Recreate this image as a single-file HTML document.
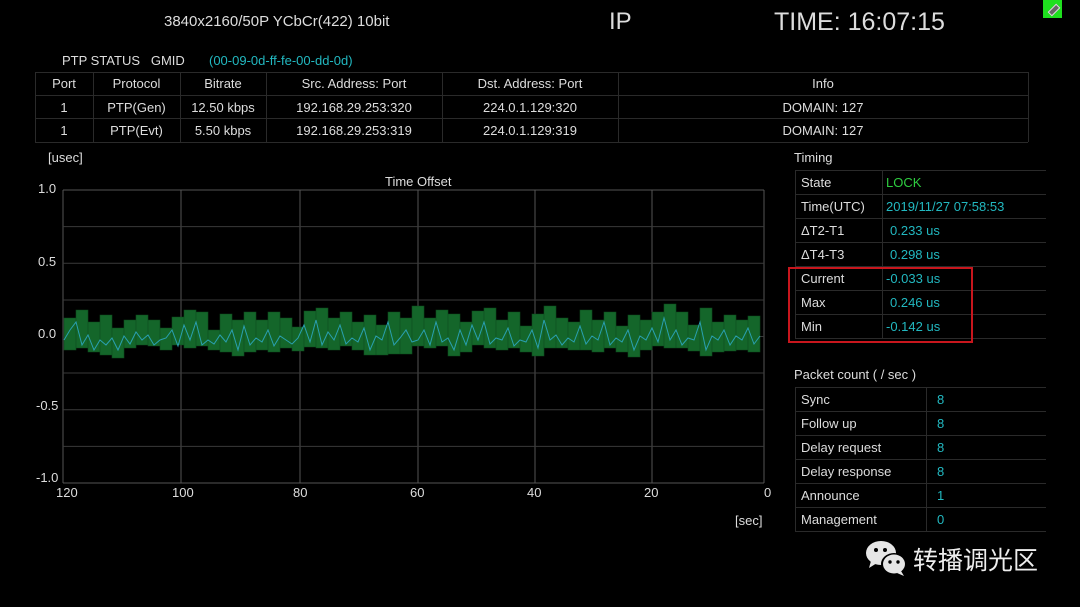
<!DOCTYPE html>
<html><head><meta charset="utf-8"><style>
body{margin:0;background:#000;width:1080px;height:607px;overflow:hidden;position:relative;font-family:"Liberation Sans","Noto Sans CJK SC",sans-serif;color:#ddd}
.t{position:absolute;white-space:nowrap}
.c{color:#22b8c0}
.hl{position:absolute;height:1px;background:#2a2a2a}
.vl{position:absolute;width:1px;background:#2a2a2a}
.tb>div{display:flex;height:23px;line-height:23px;border-top:1px solid #2a2a2a;border-left:1px solid #2a2a2a}
.tb>div>span:first-child{padding-left:5px;border-right:1px solid #2a2a2a}
.tb>div>span:last-child{color:#22b8c0}
</style></head><body>
<div class="t" style="left:164px;top:13px;font-size:15px">3840x2160/50P YCbCr(422) 10bit</div>
<div class="t" style="left:609px;top:8px;font-size:24px">IP</div>
<div class="t" style="left:774px;top:8px;font-size:25px">TIME: 16:07:15</div>
<div style="position:absolute;left:1043px;top:0;width:19px;height:18px;background:#1ee01e"></div>
<div style="position:absolute;left:1048px;top:7px;width:10px;height:4px;background:#666;border:1px solid #ddd;transform:rotate(-45deg)"></div>

<div class="t" style="left:62px;top:53px;font-size:13px">PTP STATUS&nbsp;&nbsp;&nbsp;GMID</div>
<div class="t c" style="left:209px;top:53px;font-size:13px">(00-09-0d-ff-fe-00-dd-0d)</div>
<div class="hl" style="left:35px;top:72px;width:993px"></div>
<div class="hl" style="left:35px;top:95px;width:993px"></div>
<div class="hl" style="left:35px;top:118px;width:993px"></div>
<div class="hl" style="left:35px;top:142px;width:993px"></div>
<div class="vl" style="left:35px;top:72px;height:70px"></div>
<div class="vl" style="left:93px;top:72px;height:70px"></div>
<div class="vl" style="left:180px;top:72px;height:70px"></div>
<div class="vl" style="left:266px;top:72px;height:70px"></div>
<div class="vl" style="left:442px;top:72px;height:70px"></div>
<div class="vl" style="left:618px;top:72px;height:70px"></div>
<div class="vl" style="left:1028px;top:72px;height:70px"></div>
<div style="position:absolute;left:35px;top:72px;font-size:13px;line-height:23.5px">
<div style="display:flex"><span style="width:58px;text-align:center">Port</span><span style="width:87px;text-align:center">Protocol</span><span style="width:86px;text-align:center">Bitrate</span><span style="width:176px;text-align:center">Src. Address: Port</span><span style="width:176px;text-align:center">Dst. Address: Port</span><span style="width:410px;text-align:center">Info</span></div>
<div style="display:flex"><span style="width:58px;text-align:center">1</span><span style="width:87px;text-align:center">PTP(Gen)</span><span style="width:86px;text-align:center">12.50 kbps</span><span style="width:176px;text-align:center">192.168.29.253:320</span><span style="width:176px;text-align:center">224.0.1.129:320</span><span style="width:410px;text-align:center">DOMAIN: 127</span></div>
<div style="display:flex"><span style="width:58px;text-align:center">1</span><span style="width:87px;text-align:center">PTP(Evt)</span><span style="width:86px;text-align:center">5.50 kbps</span><span style="width:176px;text-align:center">192.168.29.253:319</span><span style="width:176px;text-align:center">224.0.1.129:319</span><span style="width:410px;text-align:center">DOMAIN: 127</span></div>
</div>

<div class="t" style="left:48px;top:150px;font-size:13px">[usec]</div>
<div class="t" style="left:385px;top:174px;font-size:13px">Time Offset</div>
<div class="t" style="left:38px;top:181px;font-size:13px">1.0</div>
<div class="t" style="left:38px;top:254px;font-size:13px">0.5</div>
<div class="t" style="left:38px;top:326px;font-size:13px">0.0</div>
<div class="t" style="left:36px;top:398px;font-size:13px">-0.5</div>
<div class="t" style="left:36px;top:470px;font-size:13px">-1.0</div>
<div class="t" style="left:56px;top:485px;font-size:13px">120</div>
<div class="t" style="left:172px;top:485px;font-size:13px">100</div>
<div class="t" style="left:293px;top:485px;font-size:13px">80</div>
<div class="t" style="left:410px;top:485px;font-size:13px">60</div>
<div class="t" style="left:527px;top:485px;font-size:13px">40</div>
<div class="t" style="left:644px;top:485px;font-size:13px">20</div>
<div class="t" style="left:764px;top:485px;font-size:13px">0</div>
<div class="t" style="left:735px;top:513px;font-size:13px">[sec]</div>
<svg style="position:absolute;left:0;top:0" width="1080" height="607">
<g stroke="#555">
<line x1="63" y1="190" x2="63" y2="483"/><line x1="181" y1="190" x2="181" y2="483"/><line x1="300" y1="190" x2="300" y2="483"/><line x1="418" y1="190" x2="418" y2="483"/><line x1="535" y1="190" x2="535" y2="483"/><line x1="652" y1="190" x2="652" y2="483"/><line x1="764" y1="190" x2="764" y2="483"/>
<line x1="63" y1="190" x2="764" y2="190"/><line x1="63" y1="483" x2="764" y2="483"/>
</g>
<g stroke="#3a3a3a">
<line x1="63" y1="226.6" x2="764" y2="226.6"/><line x1="63" y1="263.3" x2="764" y2="263.3"/><line x1="63" y1="300" x2="764" y2="300"/><line x1="63" y1="336.5" x2="764" y2="336.5"/><line x1="63" y1="373" x2="764" y2="373"/><line x1="63" y1="409.8" x2="764" y2="409.8"/><line x1="63" y1="446.4" x2="764" y2="446.4"/>
</g>
<path fill="#14662a" stroke="#0d4a1d" stroke-width="0.6" d="
M64 318h12v32h-12z M76 310h12v38h-12z M88 322h12v30h-12z M100 315h12v40h-12z M112 328h12v30h-12z
M124 320h12v28h-12z M136 315h12v30h-12z M148 320h12v26h-12z M160 328h12v22h-12z M172 317h12v28h-12z
M184 310h12v38h-12z M196 312h12v34h-12z M208 330h12v20h-12z M220 314h12v38h-12z M232 320h12v36h-12z
M244 312h12v40h-12z M256 320h12v30h-12z M268 312h12v40h-12z M280 318h12v30h-12z M292 327h12v24h-12z
M304 311h12v36h-12z M316 308h12v40h-12z M328 318h12v32h-12z M340 312h12v34h-12z M352 322h12v28h-12z
M364 315h12v40h-12z M376 325h12v30h-12z M388 312h12v42h-12z M400 318h12v36h-12z M412 306h12v40h-12z
M424 318h12v30h-12z M436 310h12v36h-12z M448 314h12v42h-12z M460 322h12v30h-12z M472 311h12v34h-12z
M484 308h12v40h-12z M496 320h12v30h-12z M508 312h12v36h-12z M520 326h12v26h-12z M532 314h12v42h-12z
M544 306h12v42h-12z M556 318h12v30h-12z M568 322h12v28h-12z M580 310h12v40h-12z M592 320h12v32h-12z
M604 312h12v36h-12z M616 326h12v26h-12z M628 315h12v42h-12z M640 320h12v30h-12z M652 312h12v34h-12z
M664 304h12v44h-12z M676 312h12v36h-12z M688 325h12v26h-12z M700 308h12v48h-12z M712 322h12v30h-12z
M724 315h12v36h-12z M736 320h12v30h-12z M748 316h12v36h-12z"/>
<polyline fill="none" stroke="#2aa0b0" stroke-width="1" points="64,340 70,330 76,322 82,345 88,335 94,350 100,340 106,345 112,338 118,350 124,336 130,344 136,332 142,340 148,335 154,345 160,340 166,338 172,330 178,346 184,325 190,340 196,322 202,345 208,340 214,344 220,335 226,342 232,330 238,350 244,326 250,345 256,338 262,342 268,330 274,346 280,336 286,340 292,344 298,338 304,325 310,342 316,320 322,345 328,332 334,340 340,325 346,344 352,338 358,342 364,328 370,350 376,336 382,340 388,322 394,345 400,338 406,330 412,342 418,340 424,330 430,345 436,322 442,342 448,338 454,350 460,330 466,345 472,325 478,340 484,322 490,344 496,338 502,340 508,328 514,346 520,340 526,342 532,330 538,348 544,320 550,340 556,335 562,345 568,338 574,342 580,326 586,344 592,336 598,340 604,322 610,345 616,338 622,342 628,330 634,350 640,336 646,340 652,328 658,342 664,318 670,340 676,330 682,345 688,338 694,340 700,322 706,350 712,336 718,340 724,330 730,345 736,336 742,340 748,328 754,344 760,336"/>
</svg>

<div class="t" style="left:794px;top:150px;font-size:13px">Timing</div>
<div class="tb" style="position:absolute;left:795px;top:170px;width:251px;font-size:13px;border-bottom:1px solid #2a2a2a">
<div><span style="width:81px">State</span><span style="padding-left:3px;color:#2ecc40!important">LOCK</span></div>
<div><span style="width:81px">Time(UTC)</span><span style="padding-left:3px">2019/11/27 07:58:53</span></div>
<div><span style="width:81px">ΔT2-T1</span><span style="padding-left:7px">0.233 us</span></div>
<div><span style="width:81px">ΔT4-T3</span><span style="padding-left:7px">0.298 us</span></div>
<div><span style="width:81px">Current</span><span style="padding-left:3px">-0.033 us</span></div>
<div><span style="width:81px">Max</span><span style="padding-left:7px">0.246 us</span></div>
<div><span style="width:81px">Min</span><span style="padding-left:3px">-0.142 us</span></div>
</div>
<div style="position:absolute;left:788px;top:267px;width:181px;height:72px;border:2px solid #c8161d"></div>
<div class="t" style="left:794px;top:367px;font-size:13px">Packet count ( / sec )</div>
<div class="tb" style="position:absolute;left:795px;top:387px;width:251px;font-size:13px;border-bottom:1px solid #2a2a2a">
<div><span style="width:125px">Sync</span><span style="padding-left:10px">8</span></div>
<div><span style="width:125px">Follow up</span><span style="padding-left:10px">8</span></div>
<div><span style="width:125px">Delay request</span><span style="padding-left:10px">8</span></div>
<div><span style="width:125px">Delay response</span><span style="padding-left:10px">8</span></div>
<div><span style="width:125px">Announce</span><span style="padding-left:10px">1</span></div>
<div><span style="width:125px">Management</span><span style="padding-left:10px">0</span></div>
</div>

<svg style="position:absolute;left:864px;top:538px" width="46" height="40" viewBox="0 0 46 40">
<ellipse cx="17" cy="15" rx="15" ry="12" fill="#e6e6e6"/><path d="M7 23 L5 30 L13 25Z" fill="#e6e6e6"/>
<circle cx="12" cy="12" r="2" fill="#000"/><circle cx="21" cy="12" r="2" fill="#000"/>
<ellipse cx="30" cy="26" rx="13" ry="11" fill="#000"/>
<ellipse cx="30" cy="26" rx="11" ry="9.5" fill="#e6e6e6"/><path d="M37 33 L40 38 L33 35Z" fill="#e6e6e6"/>
<circle cx="26" cy="24" r="1.7" fill="#000"/><circle cx="34" cy="24" r="1.7" fill="#000"/>
</svg>
<div class="t" style="left:913px;top:541px;font-size:25px;color:#eee">转播调光区</div>
</body></html>
